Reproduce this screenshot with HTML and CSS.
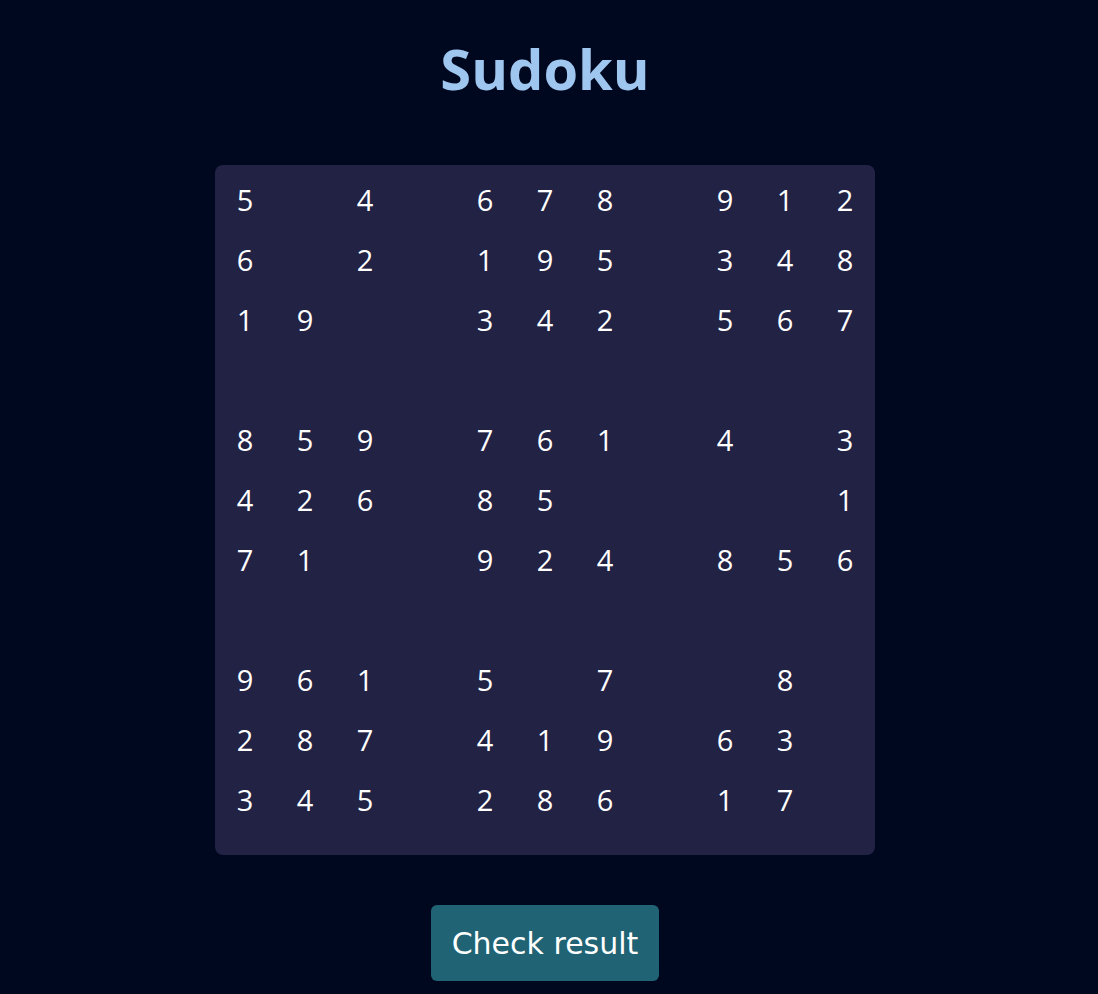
FILE: index.html
```html
<!DOCTYPE html>
<html lang="en">
<head>
<meta charset="utf-8">
<title>Sudoku</title>
<link rel="stylesheet" href="styles.css">
</head>
<body>
<main class="app">
  <h1 class="title">Sudoku</h1>
  <div class="board">
    <div class="box"><span>5</span><span></span><span>4</span><span>6</span><span></span><span>2</span><span>1</span><span>9</span><span></span></div>
    <div class="box"><span>6</span><span>7</span><span>8</span><span>1</span><span>9</span><span>5</span><span>3</span><span>4</span><span>2</span></div>
    <div class="box"><span>9</span><span>1</span><span>2</span><span>3</span><span>4</span><span>8</span><span>5</span><span>6</span><span>7</span></div>
    <div class="box"><span>8</span><span>5</span><span>9</span><span>4</span><span>2</span><span>6</span><span>7</span><span>1</span><span></span></div>
    <div class="box"><span>7</span><span>6</span><span>1</span><span>8</span><span>5</span><span></span><span>9</span><span>2</span><span>4</span></div>
    <div class="box"><span>4</span><span></span><span>3</span><span></span><span></span><span>1</span><span>8</span><span>5</span><span>6</span></div>
    <div class="box"><span>9</span><span>6</span><span>1</span><span>2</span><span>8</span><span>7</span><span>3</span><span>4</span><span>5</span></div>
    <div class="box"><span>5</span><span></span><span>7</span><span>4</span><span>1</span><span>9</span><span>2</span><span>8</span><span>6</span></div>
    <div class="box"><span></span><span>8</span><span></span><span>6</span><span>3</span><span></span><span>1</span><span>7</span><span></span></div>
  </div>
  <button class="check" type="button">Check result</button>
</main>
</body>
</html>
```
FILE: styles.css
```css
html, body {
  margin: 0;
  padding: 0;
}
body {
  background: #000820;
  color: #ffffff;
  font-family: "Open Sans", "Noto Sans", sans-serif;
  min-height: 994px;
}
.app {
  display: flex;
  flex-direction: column;
  align-items: center;
  padding-right: 8px;
}
.title {
  margin: 28px 0 57px;
  height: 80px;
  line-height: 80px;
  font-size: 56px;
  font-weight: 700;
  color: #9fc6ef;
}
.board {
  width: 660px;
  box-sizing: border-box;
  padding: 4px 0 26px;
  background: #212244;
  border-radius: 8px;
  display: grid;
  grid-template-columns: repeat(3, 180px);
  gap: 60px;
}
.box {
  display: grid;
  grid-template-columns: repeat(3, 60px);
  grid-auto-rows: 60px;
}
.box span {
  display: flex;
  align-items: center;
  justify-content: center;
  font-size: 29px;
  line-height: 1;
  color: #ffffff;
}
.check {
  margin-top: 50px;
  padding: 0 21px;
  height: 76px;
  border: none;
  border-radius: 6px;
  background: #1f6374;
  color: #ffffff;
  font-family: "DejaVu Sans", sans-serif;
  font-size: 30px;
  cursor: pointer;
}
```
